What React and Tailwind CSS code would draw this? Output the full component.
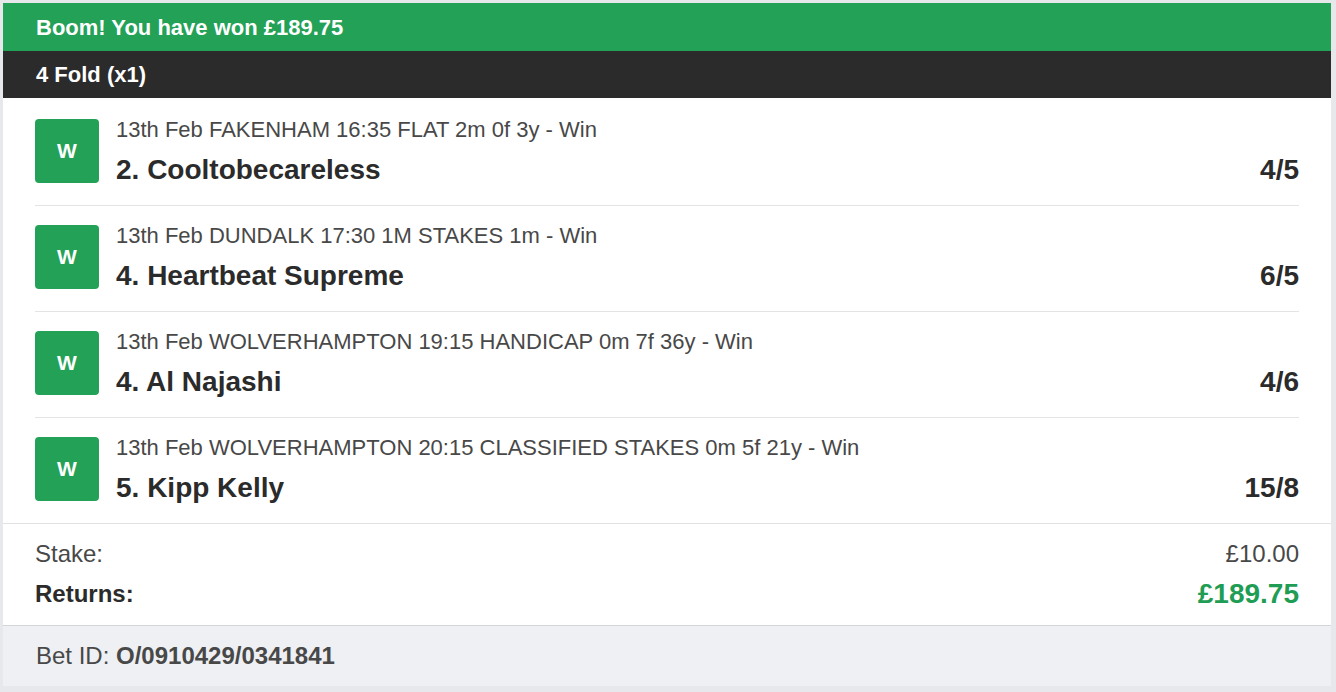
import React from 'react';

const legs = [
  { meta: '13th Feb FAKENHAM 16:35 FLAT 2m 0f 3y - Win', name: '2. Cooltobecareless', odds: '4/5' },
  { meta: '13th Feb DUNDALK 17:30 1M STAKES 1m - Win', name: '4. Heartbeat Supreme', odds: '6/5' },
  { meta: '13th Feb WOLVERHAMPTON 19:15 HANDICAP 0m 7f 36y - Win', name: '4. Al Najashi', odds: '4/6' },
  { meta: '13th Feb WOLVERHAMPTON 20:15 CLASSIFIED STAKES 0m 5f 21y - Win', name: '5. Kipp Kelly', odds: '15/8' },
];

function Leg({ leg, last }) {
  return (
    <div className={`flex pt-[17px] pb-[19px] ${last ? '' : 'border-b border-[#e4e4e4]'}`}>
      <div className="w-16 h-16 mt-[2px] shrink-0 rounded-[4px] bg-[#22a157] flex items-center justify-center text-white font-bold text-[21px]">
        W
      </div>
      <div className="flex-1 ml-[17px]">
        <div className="text-[22px] leading-[26px] text-[#484848]">{leg.meta}</div>
        <div className="flex justify-between items-center mt-[11px] text-[28px] leading-[32px] font-bold text-[#2b2b2b]">
          <span>{leg.name}</span>
          <span>{leg.odds}</span>
        </div>
      </div>
    </div>
  );
}

export default function App() {
  return (
    <div className="min-h-screen bg-[#e6e8eb] pt-[3px] pl-[3px] pr-[5px] pb-[6px]" style={{ fontFamily: '"Liberation Sans", Arial, sans-serif' }}>
      <div className="bg-white">
        <div className="h-[48px] bg-[#22a157] px-[33px] flex items-center text-white font-bold text-[22px]">
          Boom! You have won £189.75
        </div>
        <div className="h-[47px] bg-[#2b2b2b] px-[33px] flex items-center text-white font-bold text-[22px]">
          4 Fold (x1)
        </div>
        <div className="px-[32px] pt-[2px]">
          {legs.map((leg, i) => (
            <Leg key={i} leg={leg} last={i === legs.length - 1} />
          ))}
        </div>
        <div className="border-t border-[#e2e2e2] px-[32px] pt-[16px] pb-[15px]">
          <div className="flex justify-between text-[24px] leading-[28px] text-[#484848]">
            <span>Stake:</span>
            <span>£10.00</span>
          </div>
          <div className="flex justify-between items-center mt-[10px] leading-[32px]">
            <span className="text-[24px] font-bold text-[#2b2b2b]">Returns:</span>
            <span className="text-[28px] font-bold text-[#1f9d55]">£189.75</span>
          </div>
        </div>
        <div className="h-[61px] border-t border-[#d3d5d8] bg-[#eef0f3] px-[33px] flex items-center text-[24px] text-[#484848]">
          <span>Bet ID:&nbsp;</span>
          <span className="font-bold">O/0910429/0341841</span>
        </div>
      </div>
    </div>
  );
}
